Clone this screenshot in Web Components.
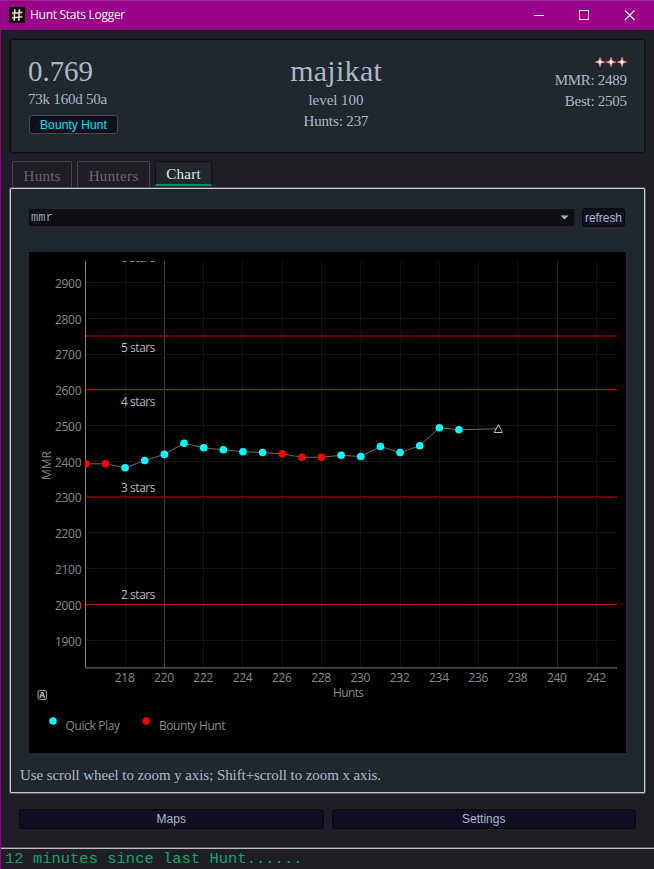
<!DOCTYPE html>
<html lang="en">
<head>
<meta charset="utf-8">
<title>Hunt Stats Logger</title>
<style>
html,body{margin:0;height:100%;background:#1f1e24}
body{overflow:hidden}
</style>
</head>
<body>
<hunt-window></hunt-window>
<script>
function define(name, html, init) {
  const t = document.createElement('template');
  t.innerHTML = html;
  customElements.define(name, class extends HTMLElement {
    constructor() {
      super();
      this.attachShadow({mode: 'open'}).append(t.content.cloneNode(true));
    }
    connectedCallback() { if (init) init.call(this, this.shadowRoot); }
  });
}

// Text line tracked out to an exact advance width.
define('fit-text', `<style>
:host{display:block;white-space:nowrap;flex:none}
span{display:inline-block}
</style><span></span>`, function (r) {
  const s = r.querySelector('span');
  s.textContent = this.getAttribute('text');
  const w = +this.getAttribute('w');
  const gap = (w - s.getBoundingClientRect().width) / s.textContent.length;
  s.style.letterSpacing = gap + 'px';
  s.style.marginRight = -gap + 'px';
});

define('title-bar', `<style>
:host{display:flex;align-items:center;height:30px;box-sizing:border-box;background:#9b008b;border-top:1px solid #a52599;border-bottom:1px solid #7c1c73;color:#fff;font:12px/28px "Open Sans","Noto Sans",sans-serif;padding:0 18px 0 9px}
fit-text{margin-left:5px;flex:1}
svg{display:block}
.ctl{display:flex;gap:35px}
</style>
<svg width="16" height="16"><rect width="16" height="16" fill="#050000"/><path d="M5.8 2.5 5.2 13.5M10.3 2.5 9.8 13.5M3 6.2 13 5.3M3 10.8 13 9.8" stroke="#b9534b" stroke-width="2.4" opacity=".45"/><path d="M5.8 2.2 5.2 13.8M10.3 2.2 9.8 13.8M3 6.2 13.4 5.3M3 10.8 13.4 9.8" stroke="#ffe9e0" stroke-width="1.3"/></svg>
<fit-text text="Hunt Stats Logger" w="95"></fit-text>
<div class="ctl">
<svg width="10" height="11"><path d="M0 5.5H10" stroke="#fff"/></svg>
<svg width="10" height="11"><rect x=".5" y=".5" width="9" height="9" fill="none" stroke="#fff"/></svg>
<svg width="12" height="11"><path d="M1 .5 10.5 10M10.5 .5 1 10" stroke="#fff" stroke-width="1.1"/></svg>
</div>`);

define('stats-panel', `<style>
:host{display:grid;grid-template-columns:1fr 1fr 1fr;box-sizing:border-box;background:#20282d;border:1px solid #0f1215;box-shadow:0 0 0 1px #19191e;border-radius:2px;padding:15px 17px 0 17px;color:#a9b7c9;font:15px/21px "Liberation Serif",serif}
div{display:flex;flex-direction:column}
.mid{align-items:center;padding-left:17px}
.end{align-items:flex-end;padding-top:4px}
.big{font-size:29px;line-height:32px}
.mid .big{font-size:30px}
.small{margin-top:2px}
.mid .small{margin-top:3px}
.mode{box-sizing:border-box;width:89px;height:19px;margin:5px 0 0 1px;border:1px solid #4a4a50;border-radius:3px;background:#100e23;color:#00e5e5;font:12px/18px "Liberation Sans",sans-serif;align-items:center}
svg{display:block;height:10px;width:32px;margin-bottom:3px}
.end svg{margin-top:-2px}
</style>
<div><fit-text class="big" text="0.769" w="65"></fit-text><fit-text class="small" text="73k 160d 50a" w="79"></fit-text><div class="mode"><fit-text text="Bounty Hunt" w="67"></fit-text></div></div>
<div class="mid"><fit-text class="big" text="majikat" w="92"></fit-text><fit-text class="small" text="level 100" w="55"></fit-text><fit-text text="Hunts: 237" w="65"></fit-text></div>
<div class="end"><svg viewBox="0 0 32 10"><defs><path id="s" d="M5 0 6.2 3.8 10 5 6.2 6.2 5 10 3.8 6.2 0 5 3.8 3.8Z"/></defs><g fill="#fff3ee" stroke="#d4605c" stroke-width=".8"><use href="#s"/><use href="#s" x="11"/><use href="#s" x="22"/></g></svg><fit-text text="MMR: 2489" w="72"></fit-text><fit-text text="Best: 2505" w="62"></fit-text></div>`);

define('tab-item', `<style>
:host{display:flex;justify-content:center;box-sizing:border-box;height:27px;border:1px solid #45444a;border-bottom:0;border-radius:2px 2px 0 0;color:#66666e;font:15px/28px "Liberation Serif",serif}
:host([active]){height:25px;background:#20282d;border:1px solid #0f1114;border-bottom:2px solid #128a66;color:#e6e6dc;line-height:24px}
</style><slot></slot>`);

define('push-button', `<style>
:host{display:flex;justify-content:center;align-items:center;box-sizing:border-box;height:19px;background:#100e23;border:1px solid #08080d;border-radius:3px;color:#a9b7c9;font:12px/17px "Liberation Sans",sans-serif}
</style><slot></slot>`);

define('combo-box', `<style>
:host{display:flex;align-items:center;justify-content:space-between;box-sizing:border-box;height:17px;background:#0f0e13;border-right:1px solid #1b2024;padding:0 5px 0 2px;color:#93a0ae;font:12px/16px "Liberation Mono",monospace}
svg{display:block}
</style><fit-text text="mmr" w="22"></fit-text><svg width="9" height="5"><path d="M.5 .5H8.5L4.5 4.5Z" fill="#a9b7c9"/></svg>`);

define('mmr-chart', `<style>
:host{display:block;width:597px;height:501px;flex:none;background:#000}
svg{display:block;font-family:"Open Sans","Noto Sans",sans-serif;font-size:12px}
</style><svg width="597" height="501" viewBox="29 252 597 501"></svg>`, function (r) {
  const X = v => 125.1 + (v - 218) * 19.64, Y = v => 604.5 - (v - 2000) * 0.3578;
  const snap = v => Math.floor(v) + .5;
  const text = (s, x, y, w, fill, a = 'start', extra = '') =>
    `<text x="${x}" y="${y}" textLength="${w}" fill="${fill}" text-anchor="${a}" ${extra}>${s}</text>`;
  let o = '<defs><clipPath id="plot"><rect x="85" y="261" width="533" height="407"/></clipPath></defs>';
  for (let v = 218; v <= 242; v += 2) {
    o += `<path d="M${snap(X(v))} 261V667" stroke="${v === 220 ? '#3c3c3c' : v === 240 ? '#262626' : '#111'}"/>`;
    o += text(v, X(v) - .3, 682.3, 20, '#888', 'middle');
  }
  for (let v = 1900; v <= 2900; v += 100) {
    if (v !== 2000) o += `<path d="M86 ${snap(Y(v))}H617" stroke="#131313"/>`;
    o += text(v, 81.5, (Y(v) + 5.2).toFixed(1), 26.5, '#888', 'end');
  }
  o += '<rect x="86" y="335" width="531" height="2" fill="#700404"/><rect x="86" y="389" width="531" height="1" fill="#a41414"/><rect x="86" y="390" width="531" height="1" fill="#300"/><rect x="86" y="496" width="531" height="2" fill="#640404"/><rect x="86" y="604" width="531" height="1" fill="#a82222"/>';
  o += '<path d="M85.5 261V668" stroke="#858585"/><path d="M85 667.8H617" stroke="#666" stroke-width="1.3"/>';
  [['5 stars', 351.5], ['4 stars', 405.5], ['3 stars', 491.5], ['2 stars', 598.5]].forEach(([s, y]) => o += text(s, 121, y, 34.5, '#b8b8b8'));
  o += '<g clip-path="url(#plot)">' + text('6 stars', 121, 262.3, 34.5, '#999');
  const pts = [[216,463.8],[217,463.8],[218,467.8],[219,460.5],[220,454.4],[221,443.2],[222,447.8],[223,449.8],[224,451.7],[225,452.5],[226,453.8],[227,457.2],[228,457.2],[229,455.3],[230,456.5],[231,446.5],[232,452.5],[233,445.8],[234,427.8],[235,429.8],[237,428.7]];
  o += `<polyline points="${pts.map(p => X(p[0]) + ',' + p[1]).join(' ')}" fill="none" stroke="#6a6a6a"/>`;
  pts.slice(0, -1).forEach(([v, y]) => o += `<circle cx="${X(v)}" cy="${y}" r="3.8" fill="${[216,217,226,227,228].includes(v) ? '#f00' : '#0ff'}"/>`);
  o += '<path d="M494.3 432.5 498.4 424.5 502.5 432.5Z" fill="#000" stroke="#c4c4c4"/></g>';
  o += text('Hunts', 333, 696.5, 31, '#888');
  o += text('MMR', 50.5, 480, 29, '#888', 'start', 'transform="rotate(-90 50.5 480)"');
  o += '<rect x="38" y="690.5" width="8.5" height="9" rx="1.5" fill="#111" stroke="#999"/><text x="42.25" y="698.3" font-size="8.5" font-weight="bold" fill="#bbb" text-anchor="middle">A</text>';
  o += '<circle cx="53" cy="721" r="3.7" fill="#0ff"/><circle cx="146.2" cy="721" r="3.7" fill="#f00"/>';
  o += text('Quick Play', 65.5, 730, 54.5, '#888') + text('Bounty Hunt', 159, 730, 66.5, '#888');
  r.querySelector('svg').innerHTML = o;
});

define('status-line', `<style>
:host{display:block;box-sizing:border-box;height:21px;border-top:1px solid #c0c0c4;box-shadow:0 -1px #56565b;padding:0 4px;color:#0fa36c;font:15.5px/20px "Liberation Mono",monospace}
</style><fit-text text="12 minutes since last Hunt......" w="297.5"></fit-text>`);

define('hunt-window', `<style>
:host{display:flex;flex-direction:column;box-sizing:border-box;width:654px;height:869px;background:#1f1e24}
main{flex:1;display:flex;flex-direction:column;border-left:1px solid #9b008b;min-height:0}
stats-panel{margin:9px 9px 0 9px;flex:none;height:114px}
nav{display:flex;align-items:flex-start;gap:5px;height:27px;padding-left:11px;margin-top:8px;box-sizing:border-box;flex:none}
.a{width:60px}.b{width:73px}.c{width:57px}
section{box-sizing:border-box;height:605px;flex:none;margin:0 9px 0 9px;border:1px solid #c8cbcf;box-shadow:0 0 0 1px #56565b;border-radius:1px;background:#20282d;padding:19px 18px 0;display:flex;flex-direction:column}
.row{display:flex;align-items:center;gap:7px;height:19px;margin-bottom:25px;flex:none}
combo-box{width:546px}
.row push-button{width:43px}
.row push-button fit-text{padding-top:2px}
.tip{margin:13px 0 0 -9px;color:#a9b7c9;font:15px/18px "Liberation Serif",serif}
.foot{display:flex;gap:8px;margin:16px 18px 0 18px;height:20px}
.foot push-button{flex:1;height:20px}
.foot fit-text{padding-top:1px}
status-line{margin-top:auto}
</style>
<title-bar></title-bar>
<main>
<stats-panel></stats-panel>
<nav><tab-item class="a"><fit-text text="Hunts" w="37"></fit-text></tab-item><tab-item class="b"><fit-text text="Hunters" w="50"></fit-text></tab-item><tab-item class="c" active><fit-text text="Chart" w="34.5"></fit-text></tab-item></nav>
<section>
<div class="row"><combo-box></combo-box><push-button><fit-text text="refresh" w="37"></fit-text></push-button></div>
<mmr-chart></mmr-chart>
<fit-text class="tip" text="Use scroll wheel to zoom y axis; Shift+scroll to zoom x axis." w="361"></fit-text>
</section>
<div class="foot"><push-button><fit-text text="Maps" w="29.5"></fit-text></push-button><push-button><fit-text text="Settings" w="43.5"></fit-text></push-button></div>
<status-line></status-line>
</main>`);
</script>
</body>
</html>
